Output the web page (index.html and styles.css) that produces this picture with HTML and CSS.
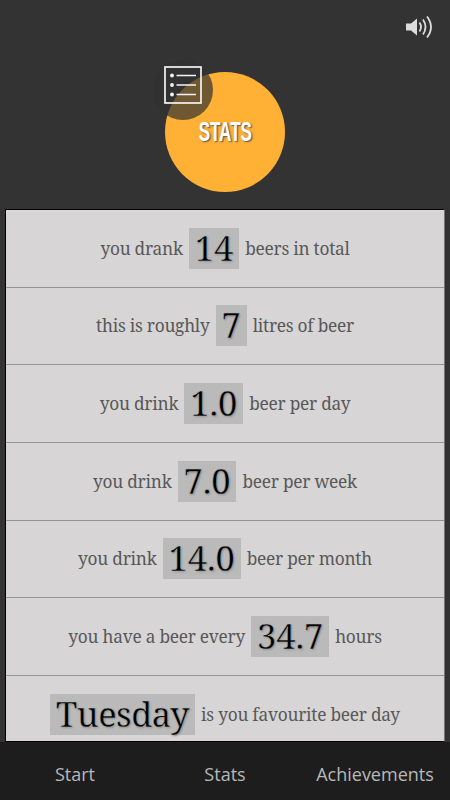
FILE: index.html
```
<!DOCTYPE html>
<html lang="en">
  <head>
    <meta charset="UTF-8" />
    <meta name="viewport" content="width=device-width, initial-scale=1.0" />
    <title>Stats</title>
    <link rel="stylesheet" href="styles.css">
  </head>
  <body>
    <header class="header">
      <svg class="sound" width="28" height="24" viewBox="0 0 28 24">
        <path d="M1 8.5h5l6-5v17l-6-5H1z" fill="#dcdcdc" />
        <path d="M14.5 7.5q3 4.5 0 9M18 4.5q5 7.5 0 15M22 1.5q8 10.5 0 21" fill="none" stroke="#dcdcdc" stroke-width="1.8" />
      </svg>
      <div class="logo">
        <span class="logo-text">STATS</span>
        <div class="badge">
          <svg class="badge-icon" width="38" height="38" viewBox="0 0 38 38">
            <rect x="1" y="1" width="36" height="36" fill="none" stroke="#f4f4f4" stroke-width="1.7" />
            <g fill="#f4f4f4">
              <circle cx="8" cy="9.5" r="1.9" />
              <circle cx="8" cy="19" r="1.9" />
              <circle cx="8" cy="28.5" r="1.9" />
            </g>
            <path d="M12.5 9.5h19.5M12.5 19h19.5M12.5 28.5h19.5" stroke="#f4f4f4" stroke-width="1.5" />
          </svg>
        </div>
      </div>
    </header>

    <ul class="stats">
      <li class="stat"><span class="label">you drank</span><b class="value">14</b><span class="label">beers in total</span></li>
      <li class="stat"><span class="label">this is roughly</span><b class="value">7</b><span class="label">litres of beer</span></li>
      <li class="stat"><span class="label">you drink</span><b class="value">1.0</b><span class="label">beer per day</span></li>
      <li class="stat"><span class="label">you drink</span><b class="value">7.0</b><span class="label">beer per week</span></li>
      <li class="stat"><span class="label">you drink</span><b class="value">14.0</b><span class="label">beer per month</span></li>
      <li class="stat"><span class="label">you have a beer every</span><b class="value">34.7</b><span class="label">hours</span></li>
      <li class="stat"><b class="value word">Tuesday</b><span class="label">is you favourite beer day</span></li>
    </ul>

    <nav class="nav">
      <a class="nav-item">Start</a>
      <a class="nav-item">Stats</a>
      <a class="nav-item">Achievements</a>
    </nav>
  </body>
</html>
```
FILE: styles.css
```
* {
  box-sizing: border-box;
}

body {
  display: flex;
  flex-direction: column;
  height: 800px;
  margin: 0;
  background: #333;
  overflow: hidden;
}

.header {
  position: relative;
  display: flex;
  justify-content: center;
  height: 209px;
  padding-top: 72px;
}

.sound {
  position: absolute;
  top: 15px;
  right: 17px;
}

.logo {
  position: relative;
  display: flex;
  align-items: center;
  justify-content: center;
  width: 120px;
  height: 120px;
  border-radius: 50%;
  background: #ffb135;
}

.logo-text {
  padding-top: 1px;
  color: #fff;
  font: bold 27px "Liberation Sans Narrow", "Liberation Sans", sans-serif;
  text-shadow: 2px 1px 2px #555;
  transform: scaleX(0.63);
}

.badge {
  position: absolute;
  top: -12px;
  left: -12px;
  display: flex;
  align-items: center;
  justify-content: center;
  width: 60px;
  height: 60px;
  border-radius: 50%;
  background: rgba(48, 48, 48, 0.7);
}

.badge-icon {
  margin-top: -10px;
}

.stats {
  flex: 1;
  margin: 0 5px;
  padding: 0;
  overflow: hidden;
  list-style: none;
  background: #d7d5d6;
  border: 1px solid #000;
  border-right-color: #777;
  font-family: "Droid Serif", "Noto Serif", "DejaVu Serif Condensed", "DejaVu Serif", serif;
}

.stat {
  display: flex;
  align-items: center;
  justify-content: center;
  gap: 6px;
  height: 77.67px;
  border-bottom: 1px solid #969596;
  white-space: nowrap;
}

.label {
  padding-top: 1px;
  color: #585858;
  font-size: 17.3px;
  letter-spacing: -0.25px;
  line-height: 24px;
}

.value {
  height: 41px;
  padding: 0 6px;
  background: #bababa;
  color: #000;
  font-size: 34.5px;
  font-weight: normal;
  letter-spacing: -0.1px;
  line-height: 40px;
  text-shadow: 1px 1px 2px #909090;
  -webkit-text-stroke: 0.4px #bababa;
}

.word {
  letter-spacing: -0.5px;
}

.nav {
  display: flex;
  height: 58px;
  background: #1d1d1d;
}

.nav-item {
  flex: 1;
  color: #b8b8b8;
  font: 18px/64px "Open Sans", sans-serif;
  text-align: center;
}
```
